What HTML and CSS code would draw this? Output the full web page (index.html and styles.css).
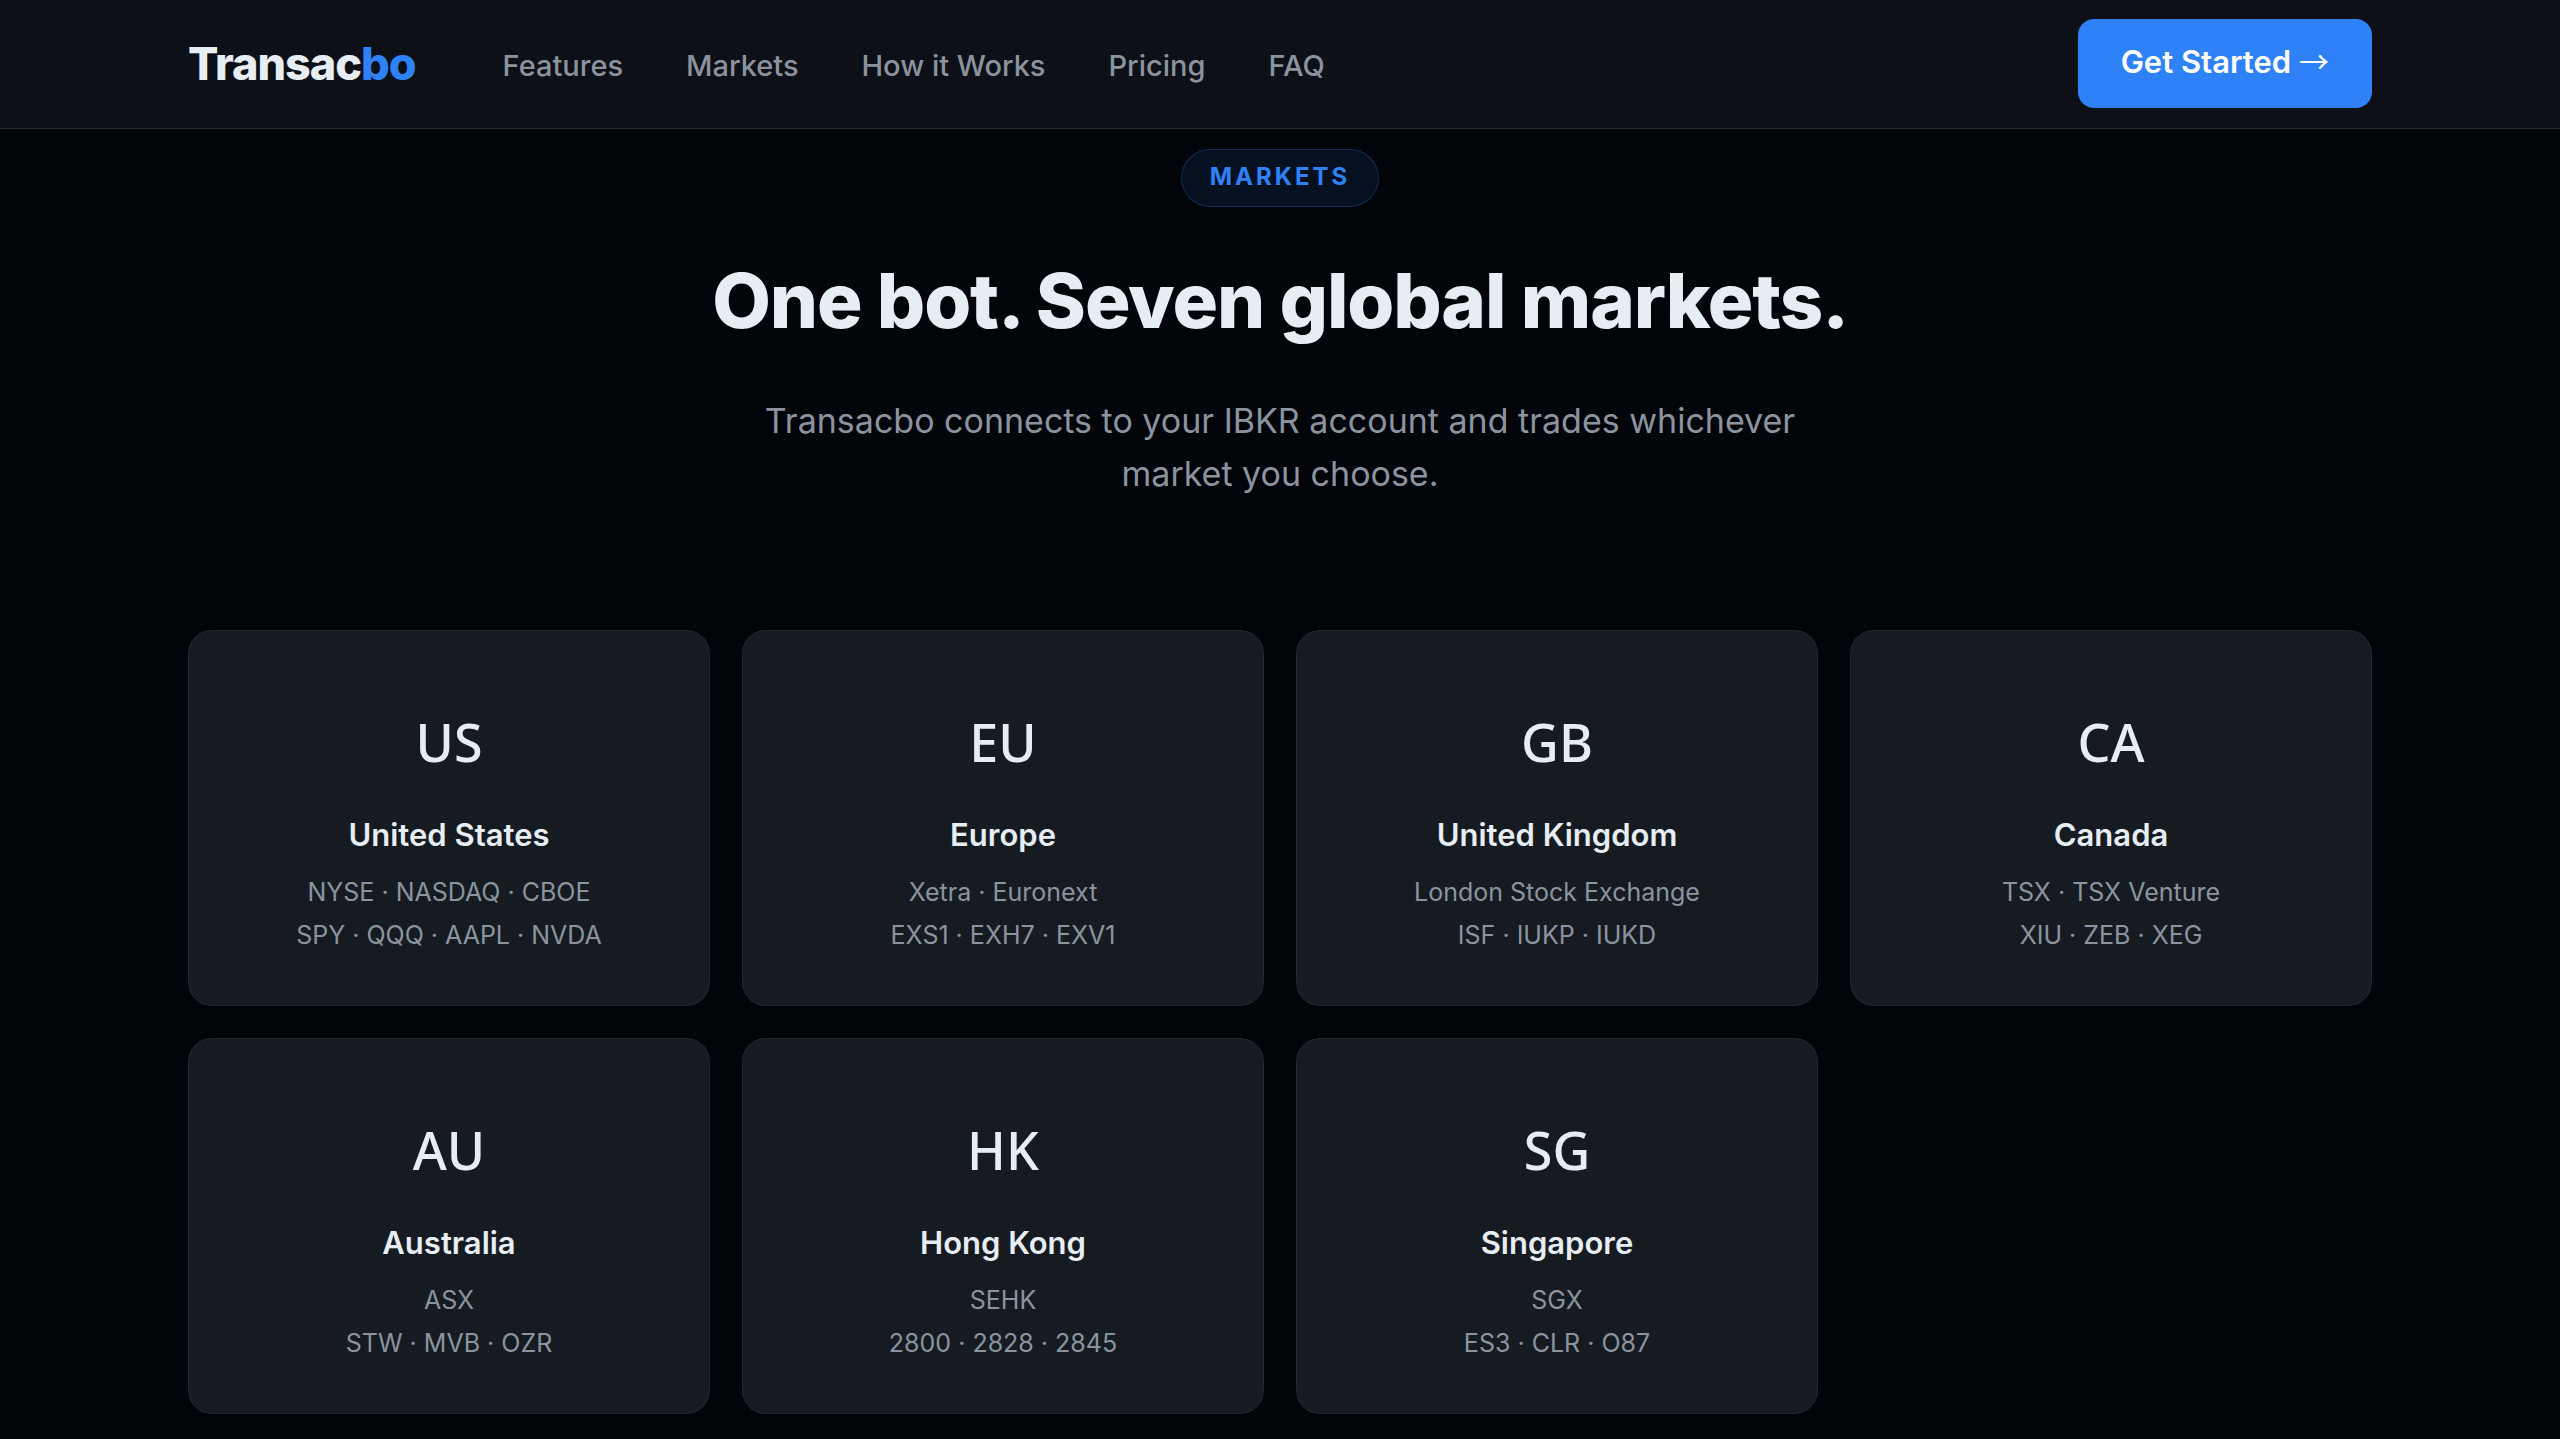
FILE: index.html
```
<!DOCTYPE html>
<html lang="en">
  <head>
    <meta charset="UTF-8" />
    <meta name="viewport" content="width=device-width, initial-scale=1.0" />
    <title>Transacbo - Markets</title>
    <link rel="stylesheet" href="styles.css">
  </head>
  <body>
    <!-- Navigation -->
    <nav class="navbar">
      <div class="container nav-inner">
        <a href="#" class="logo">Transac<span>bo</span></a>
        <div class="nav-links">
          <a href="#features">Features</a>
          <a href="#markets">Markets</a>
          <a href="#how">How it Works</a>
          <a href="#pricing">Pricing</a>
          <a href="#faq">FAQ</a>
        </div>
        <a href="#pricing" class="btn-primary">Get Started <span class="arrow">→</span></a>
      </div>
    </nav>

    <!-- Markets -->
    <section id="markets" class="markets">
      <div class="container">
        <div class="section-header">
          <span class="section-tag">MARKETS</span>
          <h2>One bot. Seven global markets.</h2>
          <p>Transacbo connects to your IBKR account and trades whichever market you choose.</p>
        </div>

        <div class="markets-grid">
          <div class="market-card">
            <div class="market-flag">US</div>
            <h3>United States</h3>
            <p>NYSE · NASDAQ · CBOE<br>SPY · QQQ · AAPL · NVDA</p>
          </div>
          <div class="market-card">
            <div class="market-flag">EU</div>
            <h3>Europe</h3>
            <p>Xetra · Euronext<br>EXS1 · EXH7 · EXV1</p>
          </div>
          <div class="market-card">
            <div class="market-flag">GB</div>
            <h3>United Kingdom</h3>
            <p>London Stock Exchange<br>ISF · IUKP · IUKD</p>
          </div>
          <div class="market-card">
            <div class="market-flag">CA</div>
            <h3>Canada</h3>
            <p>TSX · TSX Venture<br>XIU · ZEB · XEG</p>
          </div>
          <div class="market-card">
            <div class="market-flag">AU</div>
            <h3>Australia</h3>
            <p>ASX<br>STW · MVB · OZR</p>
          </div>
          <div class="market-card">
            <div class="market-flag">HK</div>
            <h3>Hong Kong</h3>
            <p>SEHK<br>2800 · 2828 · 2845</p>
          </div>
          <div class="market-card">
            <div class="market-flag">SG</div>
            <h3>Singapore</h3>
            <p>SGX<br>ES3 · CLR · O87</p>
          </div>
        </div>
      </div>
    </section>
  </body>
</html>
```
FILE: styles.css
```
:root {
  --bg: #010409;
  --bg-nav: #0d1017;
  --bg-card: #161b22;
  --border: rgba(255, 255, 255, 0.06);
  --text: #e6edf3;
  --muted: #8b949e;
  --blue: #2f81f7;
}

* {
  margin: 0;
  padding: 0;
  box-sizing: border-box;
}

body {
  background: var(--bg);
  color: var(--text);
  font-family: Inter, "Liberation Sans", sans-serif;
}

a {
  text-decoration: none;
}

.container {
  max-width: 2184px;
  margin: 0 auto;
}

/* Navigation */
.navbar {
  position: fixed;
  top: 0;
  left: 0;
  width: 100%;
  background: var(--bg-nav);
  border-bottom: 1px solid rgba(255, 255, 255, 0.1);
  z-index: 100;
}

.nav-inner {
  display: flex;
  align-items: center;
  padding: 19px 0 20px;
}

.logo {
  color: var(--text);
  font-size: 45px;
  font-weight: 800;
  letter-spacing: -1px;
}

.logo span {
  color: var(--blue);
}

.nav-links {
  display: flex;
  gap: 63px;
  margin-left: 87px;
  padding-top: 3px;
}

.nav-links a {
  color: var(--muted);
  font-size: 29px;
  font-weight: 500;
}

.btn-primary {
  margin-left: auto;
  padding: 16px 43px 20px;
  background: var(--blue);
  border-radius: 16px;
  color: #fff;
  font-size: 31px;
  font-weight: 600;
  line-height: 53px;
}

.arrow {
  font-family: "Noto Sans CJK JP", sans-serif;
  font-size: 30px;
  font-weight: 400;
  line-height: 1;
}

/* Markets */
.markets {
  padding: 149px 0 24px;
}

.section-header {
  display: flex;
  flex-direction: column;
  align-items: center;
  margin-bottom: 130px;
  text-align: center;
}

.section-tag {
  padding: 7px 28px 9px;
  margin-bottom: 49px;
  background: rgba(47, 129, 247, 0.1);
  border: 1px solid rgba(47, 129, 247, 0.25);
  border-radius: 32px;
  color: var(--blue);
  font-size: 24px;
  font-weight: 700;
  letter-spacing: 3px;
  line-height: 40px;
}

.section-header h2 {
  margin-bottom: 50px;
  font-size: 76px;
  font-weight: 800;
  letter-spacing: -0.015em;
  line-height: 88px;
}

.section-header p {
  max-width: 1092px;
  color: var(--muted);
  font-size: 34px;
  line-height: 53px;
}

.markets-grid {
  display: grid;
  grid-template-columns: repeat(4, 1fr);
  gap: 32px;
}

.market-card {
  padding: 49px 32px 48px;
  background: var(--bg-card);
  border: 1px solid var(--border);
  border-radius: 24px;
  text-align: center;
}

.market-flag {
  margin-bottom: 4px;
  font-family: "Noto Sans", "Open Sans", sans-serif;
  font-size: 52px;
  font-weight: 500;
  line-height: 124px;
}

.market-card h3 {
  margin-bottom: 10px;
  font-size: 31px;
  font-weight: 600;
  line-height: 53px;
}

.market-card p {
  color: var(--muted);
  font-size: 25px;
  line-height: 43px;
}

@media (max-width: 2240px) {
  .container {
    padding-left: 28px;
    padding-right: 28px;
  }
}

@media (max-width: 1500px) {
  .nav-links {
    display: none;
  }

  .markets-grid {
    grid-template-columns: repeat(2, 1fr);
  }
}
```
